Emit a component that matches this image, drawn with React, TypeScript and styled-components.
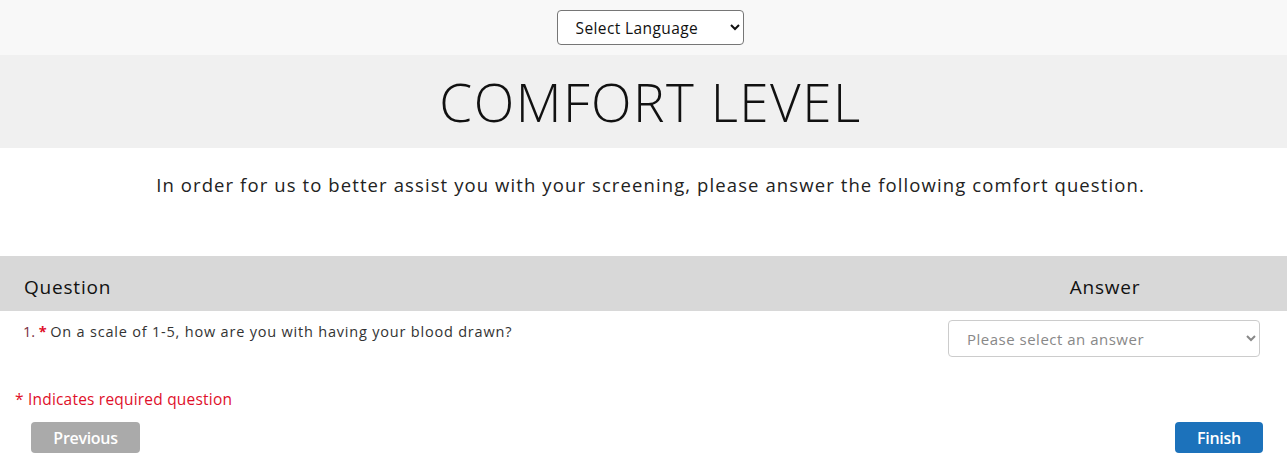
import React from "react";
import styled, { createGlobalStyle } from "styled-components";

const Global = createGlobalStyle`
  html, body { margin: 0; padding: 0; background: #fff; }
  body { font-family: "Open Sans", "Liberation Sans", sans-serif; color: #111; }
`;

const TopBar = styled.div`
  background: #f8f8f8;
  height: 55px;
  display: flex;
  justify-content: center;
  align-items: flex-start;
  padding: 10px 0 0 13px;
  box-sizing: border-box;
`;

const LangSelect = styled.select`
  width: 187px;
  height: 35px;
  font-family: "Open Sans", sans-serif;
  font-size: 15.5px;
  letter-spacing: 0.4px;
  color: #111;
  background: #fff;
  border: 1px solid #767676;
  border-radius: 4px;
  padding: 0 10px 0 14px;
`;

const TitleBand = styled.div`
  background: #f0f0f0;
  height: 93px;
  display: flex;
  align-items: center;
  justify-content: center;
  padding-left: 14px;
`;

const Title = styled.h1`
  margin: 0;
  font-family: "Open Sans", sans-serif;
  font-weight: 300;
  font-size: 53px;
  letter-spacing: 1.5px;
  color: #111;
`;

const Intro = styled.p`
  margin: 0;
  padding: 24px 0 0 14px;
  height: 108px;
  box-sizing: border-box;
  text-align: center;
  font-family: "Open Sans", sans-serif;
  font-size: 18.5px;
  letter-spacing: 1.1px;
  color: #222;
`;

const TableHead = styled.div`
  background: #d8d8d8;
  height: 55px;
  display: grid;
  grid-template-columns: 1fr 310px;
  align-items: center;
  padding: 7px 27px 0 24px;
  box-sizing: border-box;
  font-family: "Open Sans", sans-serif;
  font-size: 19px;
  letter-spacing: 0.8px;
  color: #111;
`;

const HeadCell = styled.div<{ $center?: boolean }>`
  text-align: ${(p) => (p.$center ? "center" : "left")};
`;

const Row = styled.div`
  display: grid;
  grid-template-columns: 1fr 312px;
  padding: 9px 27px 0 23px;
  height: 60px;
  box-sizing: border-box;
`;

const QText = styled.div`
  font-family: "Open Sans", sans-serif;
  font-size: 14.5px;
  letter-spacing: 0.8px;
  color: #333;
  padding-top: 2px;
`;

const Num = styled.span`
  color: #7a2e3e;
  letter-spacing: 0;
  margin-right: -1px;
`;

const Star = styled.span`
  color: #e0102a;
  font-weight: bold;
  letter-spacing: 0;
  margin-right: -1px;
`;

const AnswerSelect = styled.select`
  height: 37px;
  width: 100%;
  font-family: "Open Sans", sans-serif;
  font-size: 15px;
  letter-spacing: 0.5px;
  color: #888;
  background: #fff;
  border: 1px solid #ccc;
  border-radius: 4px;
  padding: 0 12px 0 14px;
`;

const Required = styled.div`
  margin: 17px 0 0 15px;
  font-family: "Open Sans", sans-serif;
  font-size: 15.5px;
  letter-spacing: 0.2px;
  color: #e0102a;
`;

const Footer = styled.div`
  display: flex;
  justify-content: space-between;
  padding: 12px 24px 0 31px;
`;

const Btn = styled.button<{ $primary?: boolean }>`
  height: 31px;
  width: ${(p) => (p.$primary ? "88px" : "109px")};
  border: none;
  border-radius: 4px;
  background: ${(p) => (p.$primary ? "#1c72bb" : "#aaaaaa")};
  color: #fff;
  font-family: "Open Sans", sans-serif;
  font-weight: 600;
  font-size: 16px;
  letter-spacing: -0.3px;
`;

export default function App() {
  return (
    <>
      <Global />
      <TopBar>
        <LangSelect defaultValue="">
          <option value="">Select Language</option>
        </LangSelect>
      </TopBar>
      <TitleBand>
        <Title>COMFORT LEVEL</Title>
      </TitleBand>
      <Intro>
        In order for us to better assist you with your screening, please answer the following comfort question.
      </Intro>
      <TableHead>
        <HeadCell>Question</HeadCell>
        <HeadCell $center>Answer</HeadCell>
      </TableHead>
      <Row>
        <QText>
          <Num>1.</Num> <Star>*</Star> On a scale of 1-5, how are you with having your blood drawn?
        </QText>
        <AnswerSelect defaultValue="">
          <option value="">Please select an answer</option>
        </AnswerSelect>
      </Row>
      <Required>* Indicates required question</Required>
      <Footer>
        <Btn>Previous</Btn>
        <Btn $primary>Finish</Btn>
      </Footer>
    </>
  );
}
